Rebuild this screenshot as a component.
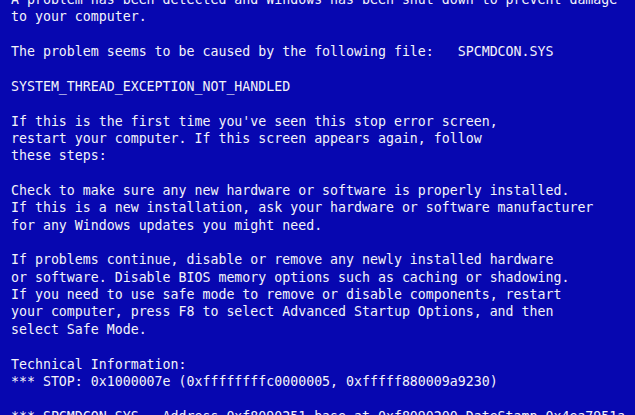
const lines = [
  "A problem has been detected and Windows has been shut down to prevent damage",
  "to your computer.",
  "",
  "The problem seems to be caused by the following file:   SPCMDCON.SYS",
  "",
  "SYSTEM_THREAD_EXCEPTION_NOT_HANDLED",
  "",
  "If this is the first time you've seen this stop error screen,",
  "restart your computer. If this screen appears again, follow",
  "these steps:",
  "",
  "Check to make sure any new hardware or software is properly installed.",
  "If this is a new installation, ask your hardware or software manufacturer",
  "for any Windows updates you might need.",
  "",
  "If problems continue, disable or remove any newly installed hardware",
  "or software. Disable BIOS memory options such as caching or shadowing.",
  "If you need to use safe mode to remove or disable components, restart",
  "your computer, press F8 to select Advanced Startup Options, and then",
  "select Safe Mode.",
  "",
  "Technical Information:",
  "*** STOP: 0x1000007e (0xffffffffc0000005, 0xfffff880009a9230)",
  "",
  "*** SPCMDCON.SYS - Address 0xf8090251 base at 0xf8090200 DateStamp 0x4ea7951a",
];

export default function App() {
  return (
    <div className="h-[415px] w-[635px] overflow-hidden bg-[#0707b0]">
      <pre className="mt-[-9px] pl-[11px] font-['DejaVu_Sans_Mono',monospace] text-[13.25px] leading-[17.36px] text-[#f4f4fa]">
        {lines.join("\n")}
      </pre>
    </div>
  );
}
